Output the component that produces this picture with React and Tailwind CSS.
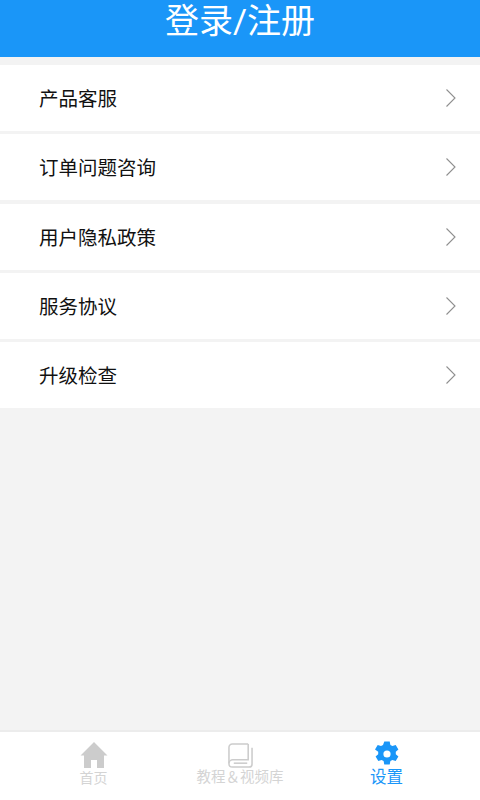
const rows = [
  { label: '产品客服', mt: 'mt-2' },
  { label: '订单问题咨询', mt: 'mt-[3px]' },
  { label: '用户隐私政策', mt: 'mt-1' },
  { label: '服务协议', mt: 'mt-[3px]' },
  { label: '升级检查', mt: 'mt-[3px]' },
];

function Chevron() {
  return (
    <svg width="10" height="18" viewBox="0 0 10 18" fill="none" className="shrink-0">
      <path d="M0.5 0.5L9 9L0.5 17.5" stroke="#8f8f8f" strokeWidth="1.1" />
    </svg>
  );
}

function HomeIcon() {
  return (
    <svg width="28" height="26" viewBox="0 0 28 26">
      <path d="M14 0L27.5 13.5H24V26H17V18H11V26H4V13.5H0.5Z" fill="#cccccc" />
    </svg>
  );
}

function BookIcon() {
  return (
    <svg width="25" height="25" viewBox="0 0 26 26" fill="none" stroke="#cccccc" strokeWidth="1.6">
      <path d="M21 1H4.5C2.5 1 1 2.5 1 4.5V21.5C1 23.5 2.5 25 4.5 25H22C24 25 25 23.5 25 22V5" />
      <path d="M21 1V17.5H5C3 17.5 1 19 1 21" />
      <path d="M6 21H20" />
    </svg>
  );
}

function GearIcon() {
  return (
    <svg width="26" height="26" viewBox="0 0 26 26" className="mt-[-2px]">
      <path
        fillRule="evenodd"
        fill="#1a96f8"
        d="M10.3 0.5h5.4l.7 3.4 2 1.1 3.3-1.1 2.7 4.6-2.6 2.3v2.4l2.6 2.3-2.7 4.6-3.3-1.1-2 1.1-.7 3.4h-5.4l-.7-3.4-2-1.1-3.3 1.1-2.7-4.6 2.6-2.3v-2.4L1 8.5l2.7-4.6L7 5l2-1.1ZM13 9.4a3.6 3.6 0 1 0 0 7.2 3.6 3.6 0 0 0 0-7.2Z"
      />
    </svg>
  );
}

function Tab({ icon, label, textClass }) {
  return (
    <div className="flex flex-col items-center">
      <div className="h-[26px] flex items-center justify-center">{icon}</div>
      <span className={`leading-[16px] mt-[2px] whitespace-nowrap ${textClass}`}>{label}</span>
    </div>
  );
}

export default function App() {
  return (
    <div className="w-[480px] h-[800px] flex flex-col bg-[#f3f3f3] overflow-hidden font-['Roboto','Noto_Sans_CJK_SC',sans-serif]">
      <div className="h-[57px] shrink-0 bg-[#1a96f8] flex justify-center">
        <h1 className="text-[34px] leading-[42px] text-white font-normal">登录/注册</h1>
      </div>

      <div className="flex-1">
        {rows.map((r) => (
          <div key={r.label} className={`h-[66px] ${r.mt} bg-white flex items-center justify-between pl-[39px] pr-6`}>
            <span className="text-[19.5px] text-[#111111] pt-1">{r.label}</span>
            <Chevron />
          </div>
        ))}
      </div>

      <div className="h-[70px] shrink-0 bg-white border-t-2 border-[#ececec] grid grid-cols-[187px_106px_187px] pt-[10px]">
        <div className="flex justify-center">
          <Tab icon={<HomeIcon />} label="首页" textClass="text-sm text-[#d4d4d4]" />
        </div>
        <div className="flex justify-center">
          <Tab icon={<BookIcon />} label="教程＆视频库" textClass="text-[14.5px] text-[#d4d4d4]" />
        </div>
        <div className="flex justify-center">
          <Tab icon={<GearIcon />} label="设置" textClass="text-[16.5px] text-[#1a96f8]" />
        </div>
      </div>
    </div>
  );
}
